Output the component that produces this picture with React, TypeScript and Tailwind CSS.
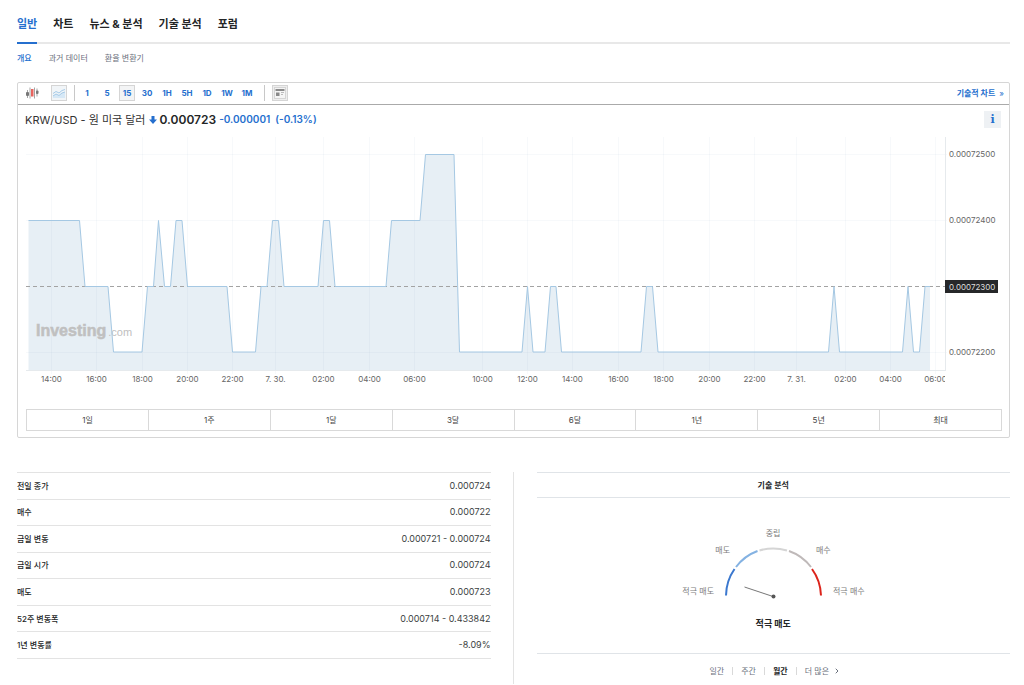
import { useState } from "react";
import { ChevronRight } from "lucide-react";
import clsx from "clsx";

const TABS = ["일반", "차트", "뉴스 & 분석", "기술 분석", "포럼"];
const SUB_TABS = ["개요", "과거 데이터", "환율 변환기"];
const INTERVALS = ["1", "5", "15", "30", "1H", "5H", "1D", "1W", "1M"];
const RANGES = ["1일", "1주", "1달", "3달", "6달", "1년", "5년", "최대"];
const PERIODS = ["일간", "주간", "월간", "더 많은"];

const STATS = [
  { label: "전일 종가", value: "0.000724" },
  { label: "매수", value: "0.000722" },
  { label: "금일 변동", value: "0.000721 - 0.000724" },
  { label: "금일 시가", value: "0.000724" },
  { label: "매도", value: "0.000723" },
  { label: "52주 변동폭", value: "0.000714 - 0.433842" },
  { label: "1년 변동률", value: "-8.09%" },
];

const PRICE_TICKS = [
  { label: "0.00072500", y: 154.5 },
  { label: "0.00072400", y: 220.5 },
  { label: "0.00072200", y: 352.5 },
];

const TIME_TICKS = [
  { label: "14:00", x: 51.5 },
  { label: "16:00", x: 96.5 },
  { label: "18:00", x: 142.5 },
  { label: "20:00", x: 187.5 },
  { label: "22:00", x: 232.5 },
  { label: "7. 30.", x: 275.5 },
  { label: "02:00", x: 323.5 },
  { label: "04:00", x: 369.5 },
  { label: "06:00", x: 414.5 },
  { label: "10:00", x: 482.5 },
  { label: "12:00", x: 527.5 },
  { label: "14:00", x: 572.5 },
  { label: "16:00", x: 618.5 },
  { label: "18:00", x: 663.5 },
  { label: "20:00", x: 709.5 },
  { label: "22:00", x: 754.5 },
  { label: "7. 31.", x: 796.5 },
  { label: "02:00", x: 845.5 },
  { label: "04:00", x: 890.5 },
  { label: "06:00", x: 935.5 },
];

// last digit of the price (725 -> 5) mapped to a line on the chart
const LEVEL_Y: Record<number, number> = { 5: 154.5, 4: 220.5, 3: 286.5, 2: 352 };

const SERIES: [number, number][] = [
  [28.5, 4], [79.5, 4], [85, 3], [108, 3], [113.5, 2], [142, 2], [147.5, 3],
  [153.5, 3], [158.5, 4], [164.5, 3], [170.5, 3], [176, 4], [182, 4],
  [187.5, 3], [227, 3], [232.5, 2], [255.5, 2], [261, 3], [267, 3],
  [272.5, 4], [278.5, 4], [284, 3], [318, 3], [323.5, 4], [329.5, 4],
  [335, 3], [386, 3], [391.5, 4], [420, 4], [425.5, 5], [454, 5],
  [459.5, 2], [522, 2], [527.5, 3], [533, 2], [545, 2], [550.5, 3],
  [556, 3], [561.5, 2], [641, 2], [646.5, 3], [652.5, 3], [658, 2],
  [828.5, 2], [834, 3], [839.5, 2], [902.5, 2], [908, 3], [913.5, 2],
  [919.5, 2], [925, 3], [930, 3],
];

function CandleIcon() {
  return (
    <svg width="14" height="14" viewBox="0 0 14 14" aria-hidden>
      <path d="M2.5 4v8M5 1.5v11M9.5 1.5v11M12 2.5v8" stroke="#a5a5a5" />
      <rect x="1" y="6" width="3" height="4" rx="1" fill="#777" />
      <rect x="6" y="3" width="2.5" height="7.5" fill="#e8645f" />
      <rect x="11" y="4.5" width="2.5" height="3.5" rx="1" fill="#777" />
    </svg>
  );
}

function AreaIcon() {
  return (
    <svg width="12" height="12" viewBox="0 0 12 12" aria-hidden>
      <path d="M0 8.5l3-1.5 3 1L9 6l3-1v6H0z" fill="#d6e8f6" />
      <path
        d="M0 6.5L3 4.5l3 1.5 3-2.5 3-1M0 9l3-2 3 1.5 3-2.5 3-1"
        fill="none"
        stroke="#a6cbe8"
      />
    </svg>
  );
}

function NewsIcon() {
  return (
    <svg width="12" height="12" viewBox="0 0 12 12" aria-hidden>
      <rect x=".5" y=".5" width="11" height="11" fill="#f5f5f5" stroke="#d5d5d5" />
      <path d="M1.5 3h9" stroke="#8a8a8a" strokeWidth="2" />
      <rect x="2" y="5.5" width="3.5" height="3.5" fill="#8a8a8a" />
      <path d="M7 5.5h3M7 7.5h2" stroke="#bbb" />
    </svg>
  );
}

function PriceChart() {
  const line = SERIES.map(([x, level]) => `${x},${LEVEL_Y[level]}`).join(" ");

  return (
    <svg
      viewBox="26 136 976 252"
      className="block w-full"
      role="img"
      aria-label="KRW/USD"
    >
      <defs>
        <clipPath id="time-axis">
          <rect x="26" y="371" width="919" height="17" />
        </clipPath>
      </defs>

      <polygon points={`28.5,370.5 ${line} 930,370.5`} fill="#e7eff5" />
      {TIME_TICKS.map(({ x }) => (
        <path key={x} d={`M${x} 137v237`} stroke="#7f9fb5" strokeOpacity=".06" />
      ))}
      {PRICE_TICKS.map(({ y }) => (
        <path key={y} d={`M26 ${y}h921`} stroke="#7f9fb5" strokeOpacity=".06" />
      ))}
      <path d="M26 370.5h919M945.5 137v234" stroke="#e6eaed" fill="none" />

      <text
        x="36"
        y="336"
        fontSize="16"
        fontWeight="700"
        fill="#c0c0c0"
        stroke="#c0c0c0"
        strokeWidth=".5"
        fontFamily="'Liberation Sans', Arial, sans-serif"
      >
        Investing
        <tspan fontSize="11" fontWeight="400" strokeWidth="0" dx="2">
          .com
        </tspan>
      </text>

      <path d="M26 286.5h920" stroke="#a3a3a3" strokeDasharray="4 3" />
      <polyline points={line} fill="none" stroke="#a5c8e3" />

      <g fontSize="8" fill="#666">
        {PRICE_TICKS.map(({ label, y }) => (
          <text key={label} x="949" y={y + 2.5}>
            {label}
          </text>
        ))}
        <g clipPath="url(#time-axis)" textAnchor="middle">
          {TIME_TICKS.map(({ label, x }) => (
            <text key={x} x={x} y="382">
              {label}
            </text>
          ))}
        </g>
        <rect x="945" y="280" width="53" height="13" fill="#262729" />
        <text x="949" y="289.5" fill="#ddd">
          0.00072300
        </text>
      </g>
    </svg>
  );
}

function Gauge() {
  return (
    <svg width="200" height="90" viewBox="673 520 200 90" role="img" aria-label="적극 매도">
      <g fill="none" strokeWidth="2">
        <path d="M726 595.5A47.5 47.5 0 0 1 734.5 569" stroke="#3b78cf" />
        <path d="M736 567A47.5 47.5 0 0 1 757.5 551" stroke="#84b2e2" />
        <path d="M759.5 550.5A47.5 47.5 0 0 1 787 550.5" stroke="#d5d5d5" />
        <path d="M789 551A47.5 47.5 0 0 1 811 567" stroke="#bfb9b9" />
        <path d="M812 569A47.5 47.5 0 0 1 821 595.5" stroke="#dc241b" />
      </g>
      <path d="M744.5 587L773 596.5" stroke="#777" />
      <circle cx="773.5" cy="596.5" r="2" fill="#555" />
      <g fontSize="8" fill="#7c7c7c">
        <text x="773" y="536" textAnchor="middle">중립</text>
        <text x="730" y="553" textAnchor="end">매도</text>
        <text x="816" y="553">매수</text>
        <text x="714" y="594" textAnchor="end">적극 매도</text>
        <text x="833" y="594">적극 매수</text>
      </g>
    </svg>
  );
}

export default function App() {
  const [interval, setInterval] = useState("15");
  const [period, setPeriod] = useState("월간");

  return (
    <main className="min-h-screen bg-white pr-[14px] pl-[17px] font-['Inter','Noto_Sans_CJK_KR',sans-serif] text-[#232526]">
      <nav className="flex h-[44px] gap-4 border-b-2 border-[#e8e8e8] text-[11px] font-bold">
        {TABS.map((tab, i) => (
          <a
            key={tab}
            href="#"
            className={clsx(
              "-mb-[2px] border-b-2 pt-4 leading-4",
              i === 0 ? "border-[#256fce] text-[#256fce]" : "border-transparent",
            )}
          >
            {tab}
          </a>
        ))}
      </nav>
      <nav className="flex h-[38px] gap-[17px] pt-[6px] text-[8px] leading-4 text-[#6a707c]">
        {SUB_TABS.map((tab, i) => (
          <a key={tab} href="#" className={clsx(i === 0 && "font-medium text-[#256fce]")}>
            {tab}
          </a>
        ))}
      </nav>

      <section className="rounded-xs border border-[#d6d6d6]">
        <div className="flex h-[22px] items-center border-b border-[#aaa] pr-[3px] pb-px pl-[7px] text-[8px] font-bold">
          <button aria-label="캔들" className="mr-3">
            <CandleIcon />
          </button>
          <button
            aria-label="영역"
            className="flex size-4 items-center justify-center border border-[#d5d5d5] bg-[#f1f5f8]"
          >
            <AreaIcon />
          </button>
          <span className="mr-1 ml-[7px] h-4 w-px bg-[#c8c8c8]" />
          <div className="flex gap-1">
            {INTERVALS.map((item) => (
              <button
                key={item}
                onClick={() => setInterval(item)}
                className={clsx(
                  "flex h-4 w-4 items-center justify-center border whitespace-nowrap text-[#256fce]",
                  item === interval ? "border-[#d5d5d5] bg-[#f3f4f5]" : "border-transparent",
                )}
              >
                {item}
              </button>
            ))}
          </div>
          <span className="mr-[7px] ml-[9px] h-4 w-px bg-[#c8c8c8]" />
          <button
            aria-label="뉴스"
            className="flex size-4 items-center justify-center border border-[#d5d5d5] bg-[#eee]"
          >
            <NewsIcon />
          </button>
          <a href="#" className="ml-auto flex items-center gap-1 pr-[2px] text-[#256fce]">
            기술적 차트 <span className="font-normal">»</span>
          </a>
        </div>

        <div className="pr-[7px] pb-[6px] pl-2">
          <div className="flex h-[31px] items-center pr-[1px] pb-[2px]">
            <h1 className="-ml-px text-[11px] leading-5 text-[#333]">KRW/USD - 원 미국 달러</h1>
            <svg width="8" height="8" viewBox="0 0 8 8" className="mx-[3px]" aria-hidden>
              <path d="M2.5 0h3v3.5H8L4 8 0 3.5h2.5z" fill="#256fce" />
            </svg>
            <span className="text-[12px] font-semibold">0.000723</span>
            <span className="ml-[3px] text-[10px] font-semibold text-[#256fce]">
              -0.000001&nbsp; (-0.13%)
            </span>
            <button
              aria-label="정보"
              className="ml-auto size-[17px] bg-[#eef1f4] font-['DejaVu_Serif',serif] text-[11px] leading-[17px] font-bold text-[#256fce]"
            >
              i
            </button>
          </div>
          <PriceChart />
          <div className="mt-[21px] flex divide-x divide-[#d9d9d9] border border-[#d9d9d9] text-[8px] text-[#444]">
            {RANGES.map((range) => (
              <button key={range} className="h-5 flex-1">
                {range}
              </button>
            ))}
          </div>
        </div>
      </section>

      <div className="mt-[34px] flex">
        <section className="flex-1 pr-[22px]">
          <table className="h-[187px] w-full border-t border-[#e3e3e3]">
            <tbody>
              {STATS.map(({ label, value }) => (
                <tr key={label} className="border-b border-[#e3e3e3]">
                  <th scope="row" className="text-left text-[8px] leading-4 font-medium">
                    {label}
                  </th>
                  <td className="text-right text-[9px] leading-4 text-[#3c3f42]">{value}</td>
                </tr>
              ))}
            </tbody>
          </table>
        </section>

        <section className="flex h-[212px] flex-1 flex-col border-l border-[#e3e3e3] pl-[23px]">
          <h2 className="h-[26px] border-y border-[#e0e4e8] text-center text-[8px] leading-6 font-bold">
            기술 분석
          </h2>
          <div className="flex h-[155px] flex-col items-center pt-[22px]">
            <Gauge />
            <p className="mt-[6px] text-[9px] leading-4 font-bold">적극 매도</p>
          </div>
          <div className="flex items-center justify-center border-t border-[#e0e4e8] pt-[9px] pl-1 text-[8px] leading-4 text-[#6a707c]">
            {PERIODS.map((item, i) => (
              <div key={item} className="flex items-center">
                {i > 0 && <span className="mx-2 h-2 w-px bg-[#d9d9d9]" />}
                <button
                  onClick={() => setPeriod(item)}
                  className={clsx(item === period && "font-bold text-[#232526]")}
                >
                  {item}
                </button>
              </div>
            ))}
            <ChevronRight size={8} strokeWidth={3} className="ml-1" />
          </div>
        </section>
      </div>
    </main>
  );
}
